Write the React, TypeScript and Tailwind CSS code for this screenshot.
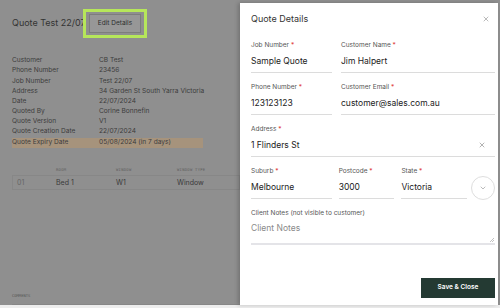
import React from "react";
import { X, ChevronDown } from "lucide-react";

const details = [
  ["Customer", "CB Test"],
  ["Phone Number", "23456"],
  ["Job Number", "Test 22/07"],
  ["Address", "34 Garden St South Yarra Victoria"],
  ["Date", "22/07/2024"],
  ["Quoted By", "Corine Bonnefin"],
  ["Quote Version", "V1"],
  ["Quote Creation Date", "22/07/2024"],
  ["Quote Expiry Date", "05/08/2024 (in 7 days)"],
];

const Label = ({ text, required = true }: { text: string; required?: boolean }) => (
  <div className="h-[10px] text-[6.5px] leading-[10px] text-[#555]">
    {text}
    {required && <span className="text-[#e0413b]"> *</span>}
  </div>
);

const Field = ({
  label,
  value,
  className = "",
  clear = false,
}: {
  label: string;
  value: string;
  className?: string;
  clear?: boolean;
}) => (
  <div className={`flex flex-col ${className}`}>
    <Label text={label} />
    <div className="flex h-[23px] items-center justify-between border-b border-[#dcdcdc] text-[8.5px] text-[#222]">
      <span>{value}</span>
      {clear && <X className="mr-[9px] h-[8px] w-[8px] text-[#666]" strokeWidth={1.5} />}
    </div>
  </div>
);

export default function App() {
  return (
    <div
      className="relative h-[308px] w-[500px] overflow-hidden bg-[#ededed]"
      style={{ fontFamily: "Inter, 'Liberation Sans', sans-serif" }}
    >
      {/* dimmed page behind the drawer */}
      <div className="h-[305px] w-full bg-[#8f8f8f] pl-[12px] pr-[260px]">
        <div className="flex h-[44px] items-center pt-[2px]">
          <h1 className="text-[9px] text-[#333]">Quote Test 22/07</h1>
        </div>

        <div className="mt-[12px] flex flex-col">
          {details.map(([k, v], i) => (
            <div
              key={k}
              className={`flex h-[10.2px] items-center text-[6.6px] text-[#3c3c3c] ${
                i === details.length - 1 ? "w-[191px] bg-[#a6937c]" : ""
              }`}
            >
              <span className="w-[87px]">{k}</span>
              <span>{v}</span>
            </div>
          ))}
        </div>

        <div
          className="mt-[19px] flex text-[3.8px] tracking-[0.3px] text-[#5e5e5e]"
          style={{ fontFamily: "'DejaVu Sans Mono', monospace" }}
        >
          <span className="ml-[44px] w-[60px]">ROOM</span>
          <span className="w-[61px]">WINDOW</span>
          <span>WINDOW TYPE</span>
        </div>
        <div className="mt-[3px] flex h-[15px] items-center border border-[#878787] text-[7px] text-[#3a3a3a]">
          <span className="w-[43px] pl-[4px] text-[#666]">01</span>
          <span className="w-[60px]">Bed 1</span>
          <span className="w-[61px]">W1</span>
          <span>Window</span>
        </div>

        <div
          className="mt-[103px] border-b border-[#878787] pb-[5px] text-[3.8px] text-[#555]"
          style={{ fontFamily: "'DejaVu Sans Mono', monospace" }}
        >
          COMMENTS
        </div>
      </div>

      {/* highlighted edit button */}
      <div className="absolute left-[83px] top-[9px] flex h-[29px] w-[64px] items-center justify-center border-[3px] border-[#b6e65a]">
        <div className="flex h-[19px] w-[52px] items-center justify-center border border-[#7d7d7d] bg-[#979797] text-[6.5px] text-[#2e2e2e]">
          Edit Details
        </div>
      </div>

      {/* drawer */}
      <div className="absolute bottom-[3px] left-[240px] top-[3px] flex w-[258px] flex-col bg-white pl-[11px] pr-[3px] shadow-[-2px_0_4px_rgba(0,0,0,0.2)]">
        <div className="flex items-center justify-between pt-[10px]">
          <h2 className="text-[9px] leading-[12px] text-[#333]">Quote Details</h2>
          <X className="mr-[5px] h-[8px] w-[8px] text-[#777]" strokeWidth={1.5} />
        </div>

        <div className="mt-[15px] flex flex-col gap-[9px]">
          <div className="grid grid-cols-[81px_1fr] gap-[9px]">
            <Field label="Job Number" value="Sample Quote" />
            <Field label="Customer Name" value="Jim Halpert" />
          </div>
          <div className="grid grid-cols-[81px_1fr] gap-[9px]">
            <Field label="Phone Number" value="123123123" />
            <Field label="Customer Email" value="customer@sales.com.au" />
          </div>
          <Field label="Address" value="1 Flinders St" clear />
          <div className="flex items-end">
            <Field label="Suburb" value="Melbourne" className="w-[81px]" />
            <Field label="Postcode" value="3000" className="ml-[7px] w-[56px]" />
            <Field label="State" value="Victoria" className="ml-[7px] w-[66px]" />
            <div className="mb-[-1px] ml-[4px] flex h-[24px] w-[24px] items-center justify-center rounded-full border border-[#dedede]">
              <ChevronDown className="h-[8px] w-[8px] text-[#777]" strokeWidth={1.5} />
            </div>
          </div>
          <div className="flex flex-col">
            <Label text="Client Notes (not visible to customer)" required={false} />
            <div className="relative h-[27px] border-b-2 border-[#e4e4e8] pt-[4px] text-[8.5px] text-[#8a8a8a]">
              Client Notes
              <svg className="absolute bottom-[1px] right-[1px] h-[5px] w-[5px]" viewBox="0 0 5 5">
                <path d="M5 1 L1 5 M5 3 L3 5" stroke="#999" strokeWidth="0.6" />
              </svg>
            </div>
          </div>
        </div>

        <div className="mt-auto mb-[7px] flex justify-end">
          <button className="h-[20px] w-[74px] bg-[#243a33] text-[6.5px] font-semibold text-white">
            Save &amp; Close
          </button>
        </div>
      </div>
    </div>
  );
}
